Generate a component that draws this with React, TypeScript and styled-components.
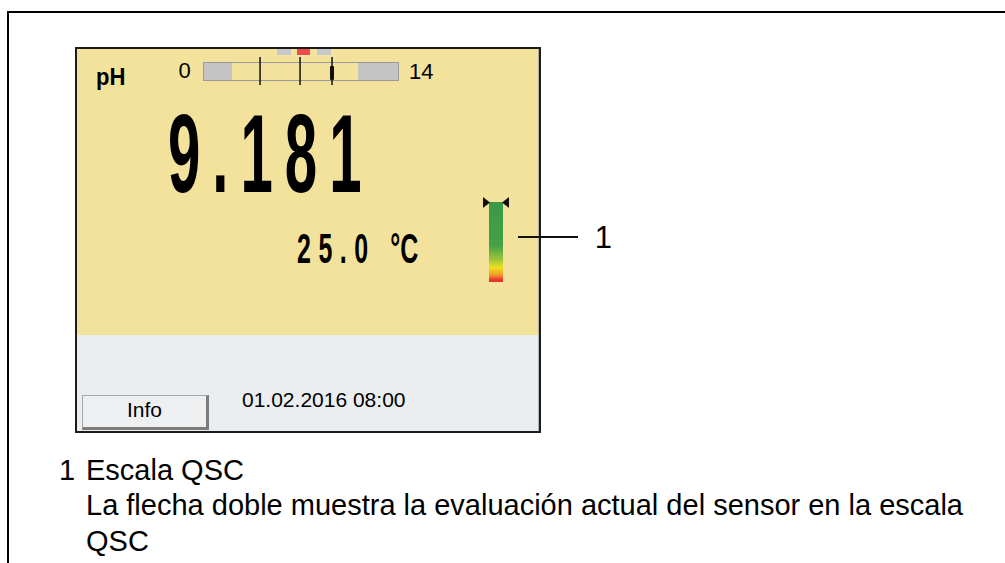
import React from "react";
import styled, { createGlobalStyle } from "styled-components";

const GlobalStyle = createGlobalStyle`
  html, body {
    margin: 0;
    padding: 0;
    background: #fff;
    overflow: hidden;
  }
  body {
    font-family: "Liberation Sans", Arial, sans-serif;
    color: #000;
  }
`;

const Frame = styled.div`
  margin: 11px 0 0 7px;
  height: 552px;
  box-sizing: border-box;
  border-top: 2px solid #000;
  border-left: 2px solid #000;
  padding: 34px 0 0 50px;
`;

const Figure = styled.div`
  position: relative;
  width: 466px;
  margin-left: 16px;
`;

const Screen = styled.div`
  width: 466px;
  height: 386px;
  box-sizing: border-box;
  border: 2px solid #1c1c1c;
  display: flex;
  flex-direction: column;
`;

const MeasurePanel = styled.div`
  height: 286px;
  flex-shrink: 0;
  background: #f3e29c;
  border-right: 1px solid #b4b0a0;
`;

const Header = styled.div`
  display: flex;
  align-items: flex-start;
  padding-left: 18.5px;
  height: 42px;
`;

const Param = styled.div`
  margin-top: 15px;
  font-size: 24px;
  line-height: 26px;
  font-weight: 700;
  transform: scaleX(0.92);
  transform-origin: left top;
`;

const ScaleLabel = styled.div<{ $gap: number; $top: number }>`
  margin-left: ${p => p.$gap}px;
  margin-top: ${p => p.$top}px;
  font-size: 22px;
  line-height: 24px;
`;

const ScaleSvg = styled.svg`
  display: block;
  margin-left: 12.6px;
  flex-shrink: 0;
`;

const Body = styled.div`
  display: flex;
  margin-top: 7.3px;
`;

const Readings = styled.div`
  flex: 1;
  min-width: 0;
  padding-left: 90.7px;
`;

const MainValue = styled.div`
  font-size: 112px;
  line-height: 112px;
  font-weight: 700;
  letter-spacing: 23px;
  white-space: nowrap;
  transform: scaleX(0.52);
  transform-origin: left top;
`;

const Temperature = styled.div`
  margin: 16.3px 0 0 129.3px;
  font-size: 43px;
  line-height: 43px;
  font-weight: 700;
  letter-spacing: 13px;
  white-space: nowrap;
  transform: scaleX(0.58);
  transform-origin: left top;

  span {
    letter-spacing: 0;
  }
`;

const Gauge = styled.div`
  position: relative;
  flex-shrink: 0;
  margin: 98.7px 29px 0 0;
  width: 26px;
  height: 85px;
`;

const LeaderLine = styled.div`
  position: absolute;
  left: 35px;
  top: 39px;
  width: 60px;
  height: 2px;
  background: #111;
`;

const CalloutNumber = styled.div`
  position: absolute;
  left: 111.7px;
  top: 24.7px;
  font-size: 31px;
  line-height: 31px;
`;

const StatusPanel = styled.div`
  flex: 1;
  display: flex;
  align-items: flex-end;
  padding: 0 0 1px 5px;
  background: #ebeef1;
  border-right: 1px solid #b4b8bc;
`;

const InfoButton = styled.div`
  width: 127px;
  height: 35px;
  box-sizing: border-box;
  display: flex;
  align-items: center;
  justify-content: center;
  padding-bottom: 3px;
  background: #eeeff0;
  border-top: 1px solid #a6a6a6;
  border-left: 1px solid #a6a6a6;
  border-right: 3px solid #7c7c7c;
  border-bottom: 3px solid #7c7c7c;
  font-size: 21px;
  line-height: 24px;
`;

const DateTime = styled.div`
  margin: 0 0 18.25px 33px;
  font-size: 21px;
  line-height: 24px;
`;

const Caption = styled.div`
  display: grid;
  grid-template-columns: 27px 900px;
  margin-top: 19.7px;
  font-size: 29px;
  line-height: 35.5px;
`;

const ScaleBar = () => (
  <svg width="26" height="85" viewBox="0 0 26 85">
    <defs>
      <linearGradient id="qsc" x1="0" y1="0" x2="0" y2="1">
        <stop offset="0" stopColor="#3a9a48" />
        <stop offset="0.54" stopColor="#46a046" />
        <stop offset="0.72" stopColor="#9cc43a" />
        <stop offset="0.82" stopColor="#f0e122" />
        <stop offset="0.91" stopColor="#f29a2a" />
        <stop offset="0.97" stopColor="#e83a30" />
        <stop offset="1" stopColor="#e83030" />
      </linearGradient>
    </defs>
    <rect x="6" y="5" width="14" height="80" fill="url(#qsc)" />
    <polygon points="0,0 7,5.5 0,11" fill="#111" />
    <polygon points="26,0 19,5.5 26,11" fill="#111" />
  </svg>
);

export default function App() {
  return (
    <>
      <GlobalStyle />
      <Frame>
        <Figure>
          <Screen>
            <MeasurePanel>
              <Header>
                <Param>pH</Param>
                <ScaleLabel $gap={51} $top={10}>0</ScaleLabel>
                <ScaleSvg width="196" height="37" viewBox="0 0 196 37">
                  <rect x="74" y="0" width="14" height="6" fill="#c8c8c8" />
                  <rect x="94" y="0" width="13" height="6" fill="#f04c4c" />
                  <rect x="114" y="0" width="14" height="6" fill="#c8c8c8" />
                  <rect x="0.5" y="13.5" width="195" height="18" fill="#f3e29c" stroke="#9a9a9a" />
                  <rect x="1" y="14" width="28" height="17" fill="#c4c4c4" />
                  <rect x="155" y="14" width="40" height="17" fill="#c4c4c4" />
                  <rect x="56.3" y="8" width="1.5" height="28" fill="#111" />
                  <rect x="96.3" y="8" width="1.5" height="28" fill="#111" />
                  <rect x="128.3" y="8" width="1.5" height="28" fill="#111" />
                  <rect x="127" y="17" width="4" height="14" rx="1" fill="#111" />
                </ScaleSvg>
                <ScaleLabel $gap={9.6} $top={11}>14</ScaleLabel>
              </Header>
              <Body>
                <Readings>
                  <MainValue>9.181</MainValue>
                  <Temperature>
                    25.0 <span>°C</span>
                  </Temperature>
                </Readings>
                <Gauge>
                  <ScaleBar />
                  <LeaderLine />
                  <CalloutNumber>1</CalloutNumber>
                </Gauge>
              </Body>
            </MeasurePanel>
            <StatusPanel>
              <InfoButton>Info</InfoButton>
              <DateTime>01.02.2016 08:00</DateTime>
            </StatusPanel>
          </Screen>
        </Figure>
        <Caption>
          <div>1</div>
          <div>
            Escala QSC
            <br />
            La flecha doble muestra la evaluación actual del sensor en la escala QSC
          </div>
        </Caption>
      </Frame>
    </>
  );
}
